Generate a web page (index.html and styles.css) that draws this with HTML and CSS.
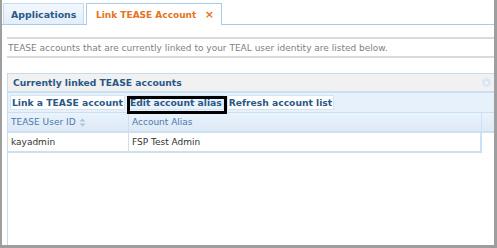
FILE: index.html
```html
<!DOCTYPE html>
<html lang="en">
<head>
  <meta charset="UTF-8" />
  <title>Link TEASE Account</title>
  <link rel="stylesheet" href="styles.css">
</head>
<body>
  <div class="frame">
    <div class="tabs">
      <div class="tab">Applications</div>
      <div class="tab active">Link TEASE Account <span class="close">&#215;</span></div>
    </div>

    <div class="content">
      <p class="intro">TEASE accounts that are currently linked to your TEAL user identity are listed below.</p>

      <div class="panel">
        <div class="panel-head">
          <span>Currently linked TEASE accounts</span>
          <span class="collapse">
            <svg width="9" height="9" viewBox="0 0 9 9"><circle cx="4.5" cy="4.5" r="4.5" fill="#dbe7f4"/><path d="M2.6 5.4 L4.5 3.4 L6.4 5.4 Z" fill="#fff"/></svg>
          </span>
        </div>
        <div class="toolbar">
          <span class="tool">Link a TEASE account</span>
          <span class="tool highlight">Edit account alias</span>
          <span class="tool">Refresh account list</span>
        </div>
        <div class="grid">
          <div class="grid-head">
            <div class="col col-id">TEASE User ID
              <svg class="sort" width="7" height="9" viewBox="0 0 7 9"><path d="M0.5 3.5 L3.5 0.5 L6.5 3.5 Z M0.5 5.5 L3.5 8.5 L6.5 5.5 Z" fill="#a9c3dc"/></svg>
            </div>
            <div class="col col-alias">Account Alias</div>
            <div class="col col-end"></div>
          </div>
          <div class="grid-row">
            <div class="col col-id">kayadmin</div>
            <div class="col col-alias">FSP Test Admin</div>
          </div>
        </div>
      </div>
    </div>
  </div>
</body>
</html>
```

FILE: styles.css
```css
* { box-sizing: border-box; }
body {
  margin: 0;
  background: #fff;
  font-family: 'DejaVu Sans', Verdana, sans-serif;
}
.frame {
  width: 497px;
  height: 248px;
  border-left: 2px solid #9e9e9e;
  border-right: 3px solid #9e9e9e;
  border-bottom: 3px solid #9e9e9e;
  overflow: hidden;
}
.tabs {
  display: flex;
  gap: 2px;
  padding: 3px 0 0 1px;
  height: 25px;
  border-bottom: 1px solid #a9cbe9;
}
.tab {
  height: 21px;
  padding: 0 7px;
  display: flex;
  align-items: center;
  font-size: 9.4px;
  font-weight: bold;
  color: #2b5987;
  background: linear-gradient(#f2f7fc, #e3eef9);
  border: 1px solid #c6dbee;
  border-bottom: none;
}
.tab:first-child { width: 81px; }
.tab.active {
  width: 136px;
  height: 22px;
  margin-bottom: -1px;
  padding-left: 9px;
  font-size: 9px;
  color: #e57321;
  background: #fff;
  border-color: #a9cbe9;
}
.close {
  margin-left: auto;
  font-size: 11px;
}
.content { padding: 0 0 0 5px; }
.intro {
  margin: 12px 0 0;
  height: 21px;
  padding: 0 0 0 1px;
  line-height: 19px;
  font-size: 9px;
  color: #7f7f7f;
  border-top: 2px solid #d9d9d9;
  border-bottom: 2px solid #d9d9d9;
}
.panel {
  margin-top: 15px;
  height: 173px;
  border-left: 1px solid #c4dcf0;
}
.panel-head {
  height: 20px;
  display: flex;
  align-items: center;
  justify-content: space-between;
  padding: 0 3px 0 5px;
  font-size: 9.2px;
  font-weight: bold;
  color: #2b5987;
  background: #f1f1f1;
  border-top: 1px solid #c4dcf0;
  border-bottom: 2px solid #c9dff2;
}
.collapse { display: flex; }
.toolbar {
  height: 20px;
  display: flex;
  align-items: center;
  gap: 3px;
  padding-left: 2px;
  background: #e6f1fc;
  border-bottom: 1px solid #c9dff2;
}
.tool {
  position: relative;
  padding: 1px 1px;
  font-size: 9.2px;
  font-weight: bold;
  color: #2b5987;
  background: #fff;
  border: 1px solid #d4e4f3;
}
.tool.highlight {
  background: #eaf3fc;
}
.tool.highlight::after {
  content: "";
  position: absolute;
  left: -2px;
  top: 0;
  right: -4px;
  bottom: -5px;
  border: 3px solid #000;
}
.grid-head, .grid-row {
  display: flex;
  height: 20px;
  align-items: center;
  font-size: 9px;
}
.grid-head {
  color: #4a7bab;
  background: linear-gradient(#eaf3fc, #dde9f6);
  border-bottom: 2px solid #cde0f2;
}
.grid-row {
  width: 474px;
  color: #333;
  border-bottom: 2px solid #cde0f2;
  border-right: 2px solid #cde0f2;
}
.col {
  height: 100%;
  display: flex;
  align-items: center;
  padding-left: 3px;
}
.col-id {
  width: 121px;
  border-right: 1px solid #cde0f2;
}
.col-alias {
  flex: 1;
}
.grid-head .col-alias {
  flex: none;
  width: 353px;
  border-right: 1px solid #cde0f2;
}
.col-end { flex: 1; }
.sort { margin-left: 3px; }
```
